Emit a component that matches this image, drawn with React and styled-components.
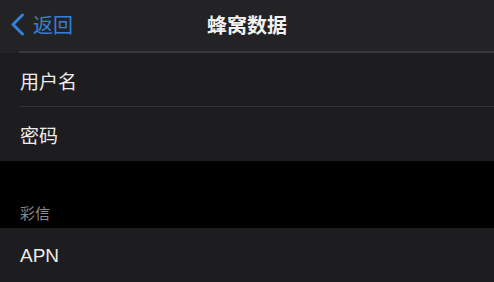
import React from "react";
import styled, { createGlobalStyle } from "styled-components";

const Global = createGlobalStyle`
  html, body { margin: 0; padding: 0; background: #000; }
  body { font-family: "Noto Sans CJK SC", "Liberation Sans", sans-serif; }
`;

const Page = styled.div`
  width: 494px;
  height: 282px;
  overflow: hidden;
  background: #000;
  display: flex;
  flex-direction: column;
`;

const NavBar = styled.div`
  height: 51px;
  flex-shrink: 0;
  background: #232325;
  display: grid;
  grid-template-columns: 1fr auto 1fr;
  align-items: center;
`;

const NavLine = styled.div`
  height: 2px;
  flex-shrink: 0;
  background: linear-gradient(to right, #232325 0 19px, #38383a 19px);
`;

const Back = styled.div`
  display: flex;
  align-items: center;
  gap: 8px;
  padding-left: 10px;
  color: #3580d6;
  font-size: 20px;
  line-height: 1;
  padding-bottom: 2px;
`;

const Title = styled.div`
  color: #f2f2f2;
  font-size: 20px;
  font-weight: 700;
  line-height: 1;
  padding-bottom: 2px;
`;

const Group = styled.div`
  background: #1d1d1f;
  display: flex;
  flex-direction: column;
  flex-shrink: 0;
`;

const Row = styled.div`
  height: ${(p) => p.$h}px;
  display: flex;
  align-items: center;
  padding-left: 20px;
  position: relative;
  color: #ececec;
  font-size: 19px;
  font-family: ${(p) =>
    p.$latin
      ? `"Liberation Sans", "Noto Sans CJK SC", sans-serif`
      : `"Noto Sans CJK SC", "Liberation Sans", sans-serif`};
  &::after {
    content: "";
    display: ${(p) => (p.$sep ? "block" : "none")};
    position: absolute;
    left: 20px;
    right: 0;
    bottom: 0;
    height: 1px;
    background: #343436;
  }
`;

const Gap = styled.div`
  height: 67px;
  flex-shrink: 0;
  display: flex;
  align-items: flex-end;
  padding: 0 0 8px 20px;
  box-sizing: border-box;
  color: #8b8b8f;
  font-size: 15px;
  line-height: 1;
`;

const Chevron = () => (
  <svg width="15" height="23" viewBox="0 0 15 23" fill="none">
    <path
      d="M12.5 2 L3 11.5 L12.5 21"
      stroke="#3580d6"
      strokeWidth="3"
      strokeLinecap="round"
      strokeLinejoin="round"
    />
  </svg>
);

export default function App() {
  return (
    <>
      <Global />
      <Page>
        <NavBar>
          <Back>
            <Chevron />
            <span>返回</span>
          </Back>
          <Title>蜂窝数据</Title>
          <div />
        </NavBar>
        <NavLine />
        <Group>
          <Row $h={54} $sep>用户名</Row>
          <Row $h={54}>密码</Row>
        </Group>
        <Gap>彩信</Gap>
        <Group>
          <Row $h={56} $latin>APN</Row>
        </Group>
      </Page>
    </>
  );
}
